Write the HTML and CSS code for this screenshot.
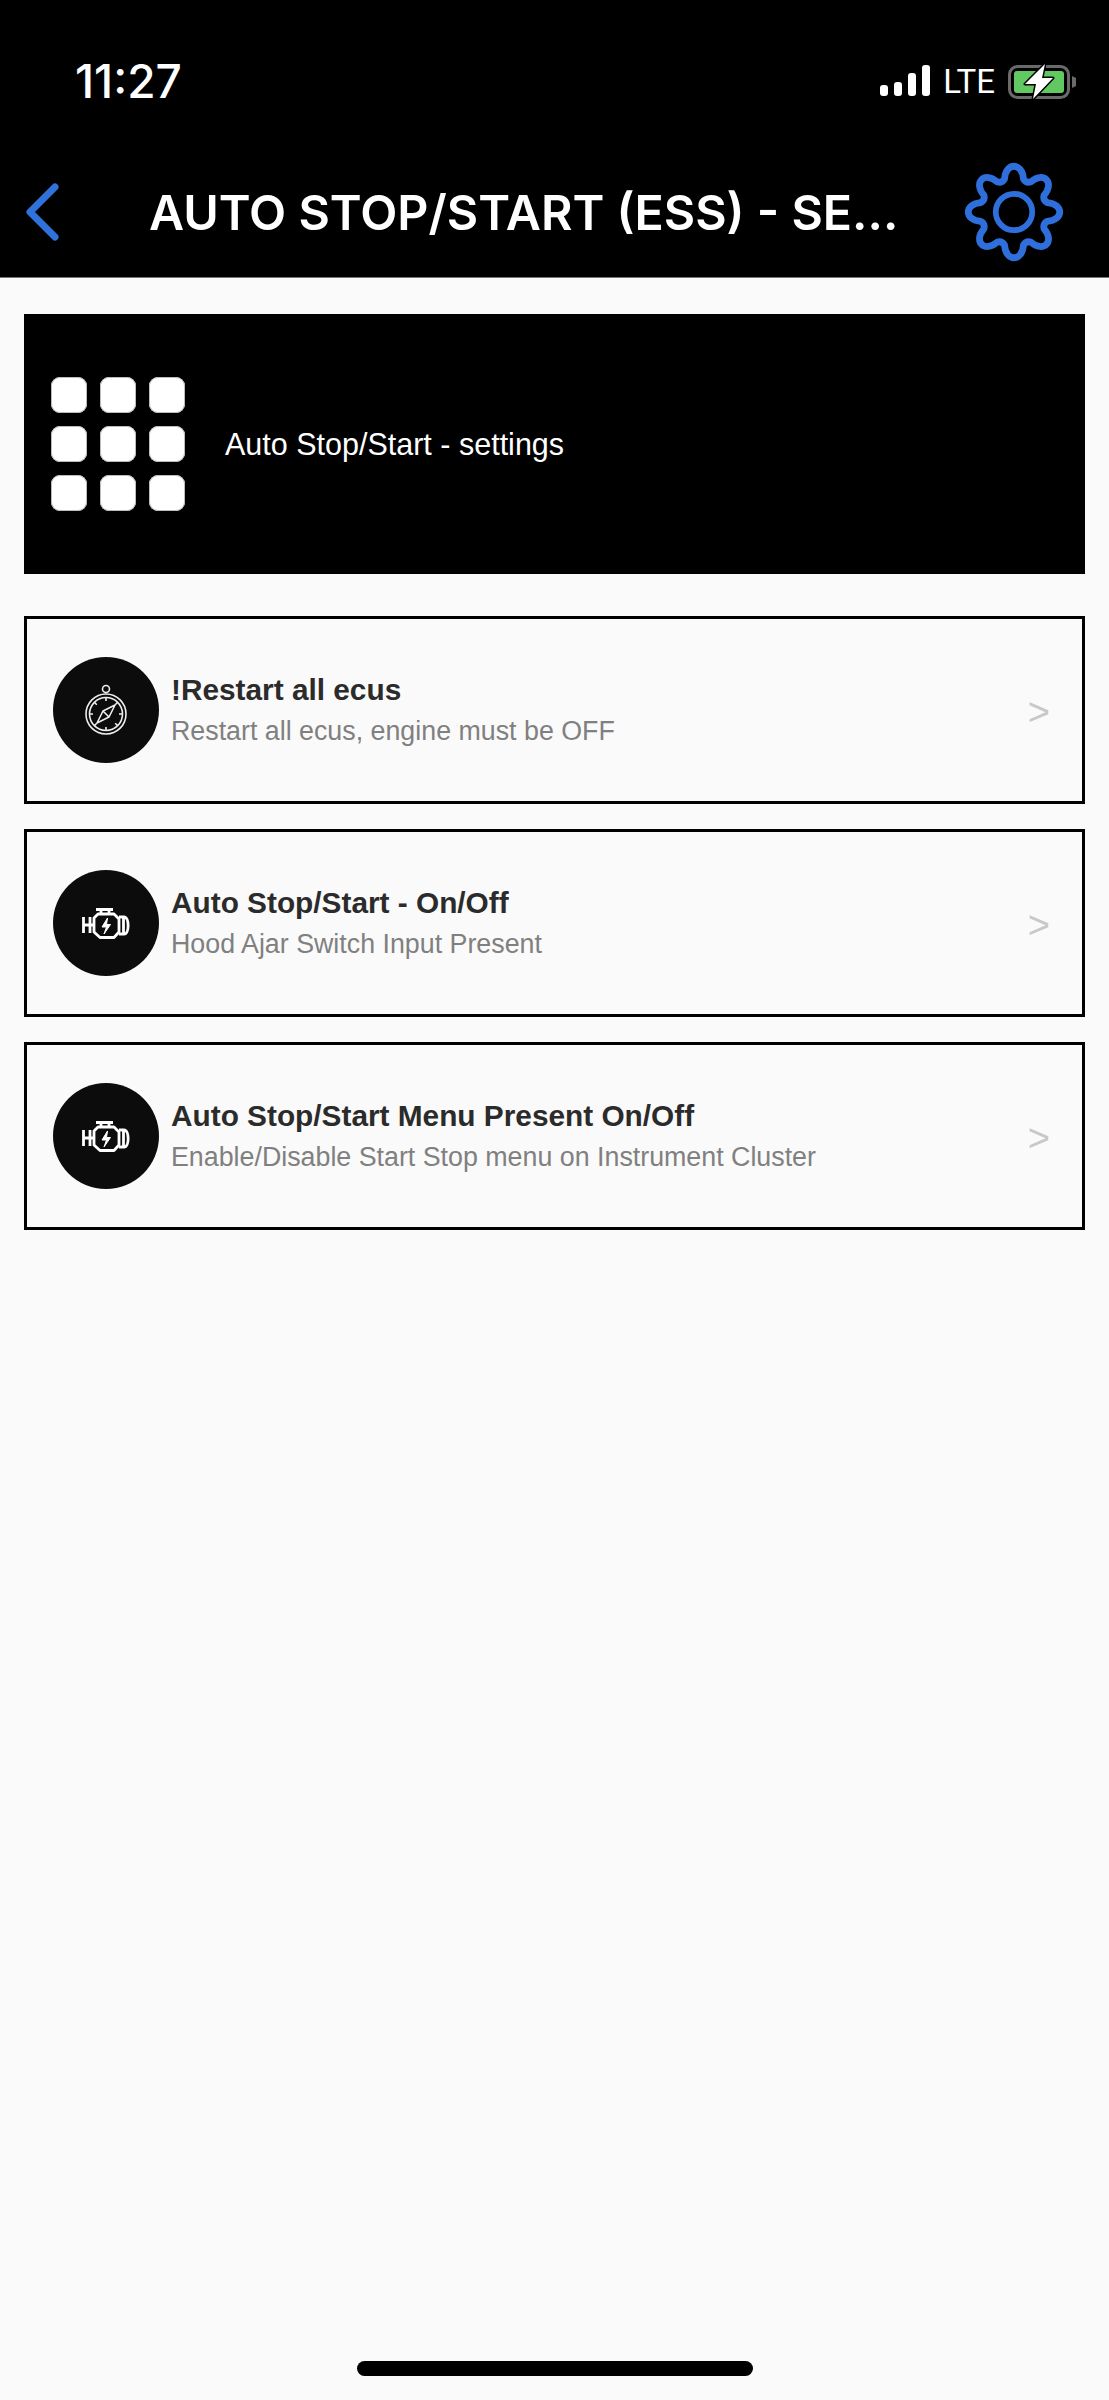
FILE: index.html
```html
<!doctype html>
<html>
<head>
  <title>Auto Stop/Start</title>
  <link rel="stylesheet" href="styles.css">
</head>
<body>
  <div id="page">
    <div id="header">
      <div id="statusBar">
        <span id="clock">11:27</span>
        <div id="statusIcons">
          <svg class="signal" width="50" height="32" viewBox="0 0 50 32" fill="#fff">
            <rect x="0" y="20" width="8" height="11" rx="3" />
            <rect x="14" y="17" width="8" height="14" rx="3" />
            <rect x="28" y="8" width="8" height="23" rx="3" />
            <rect x="42" y="0" width="8" height="31" rx="3" />
          </svg>
          <span id="network">LTE</span>
          <svg class="battery" width="69" height="37" viewBox="0 0 69 37">
            <rect x="1.5" y="3.5" width="59" height="31" rx="8" fill="none" stroke="#6a6a6a" stroke-width="3" />
            <rect x="6" y="8" width="50" height="22" rx="3" fill="#62c962" />
            <path d="M64 13 L68 15 V23 L64 25 Z" fill="#6a6a6a" />
            <path d="M37 1 L17 21 H28 L25 36 L45 15 H34 Z" fill="#fff" stroke="#000" stroke-width="3" stroke-linejoin="round" paint-order="stroke" />
          </svg>
        </div>
      </div>
      <div id="navBar">
        <svg class="back" width="36" height="60" viewBox="0 0 36 60">
          <path d="M30 5 L5 30 L30 55" fill="none" stroke="#2f72dc" stroke-width="7" stroke-linecap="round" stroke-linejoin="round" />
        </svg>
        <h1 id="navTitle">AUTO STOP/START (ESS) - SE...</h1>
        <svg class="gear" width="100" height="100" viewBox="-48 -48 96 96">
          <path fill="none" stroke="#2f6fdc" stroke-width="6.5" stroke-linejoin="round" d="M-9.1 -31.7 C-8 -48 8 -48 9.1 -31.7 Q11.5 -27.7 16 -28.8 C28.3 -39.6 39.6 -28.3 28.8 -16 Q27.7 -11.5 31.7 -9.1 C48 -8 48 8 31.7 9.1 Q27.7 11.5 28.8 16 C39.6 28.3 28.3 39.6 16 28.8 Q11.5 27.7 9.1 31.7 C8 48 -8 48 -9.1 31.7 Q-11.5 27.7 -16 28.8 C-28.3 39.6 -39.6 28.3 -28.8 16 Q-27.7 11.5 -31.7 9.1 C-48 8 -48 -8 -31.7 -9.1 Q-27.7 -11.5 -28.8 -16 C-39.6 -28.3 -28.3 -39.6 -16 -28.8 Q-11.5 -27.7 -9.1 -31.7 Z" />
          <circle r="17.5" fill="none" stroke="#2f6fdc" stroke-width="5.5" />
        </svg>
      </div>
    </div>

    <div id="content">
      <div id="banner">
        <div id="appGrid">
          <span></span><span></span><span></span>
          <span></span><span></span><span></span>
          <span></span><span></span><span></span>
        </div>
        <p id="bannerText">Auto Stop/Start - settings</p>
      </div>

      <div class="card">
        <div class="cardIcon">
          <svg width="46" height="56" viewBox="0 0 46 56" fill="none" stroke="#eee" stroke-width="1.6">
            <circle cx="23" cy="7" r="3.5" />
            <circle cx="23" cy="32" r="20" />
            <circle cx="23" cy="32" r="16.5" />
            <path d="M23 15.5 V19 M23 45 V48.5 M6.5 32 H10 M36 32 H39.5 M11.3 20.3 L13.8 22.8 M32.2 41.2 L34.7 43.7 M34.7 20.3 L32.2 22.8 M13.8 41.2 L11.3 43.7" />
            <path d="M32 23 L26 35 L14 41 L20 29 Z M20 29 L26 35" stroke-linejoin="round" />
          </svg>
        </div>
        <div class="cardText">
          <div class="cardTitle">!Restart all ecus</div>
          <div class="cardSub">Restart all ecus, engine must be OFF</div>
        </div>
        <span class="cardArrow">&gt;</span>
      </div>

      <div class="card">
        <div class="cardIcon">
          <svg width="48" height="31" viewBox="0 0 48 31" fill="none" stroke="#fff" stroke-width="2.8" stroke-linejoin="round">
            <path d="M14 1.5 H31 M19 1.5 V6 M27 1.5 V6" />
            <path d="M16 6 H32 L37 11 V24 L32 29.5 H18 L12 24 V10 Z" />
            <path d="M1.5 9 V25 M8 9 V25 M1.5 17 H12" />
            <path d="M37 9 H42 C47.5 9 47.5 26 42 26 H37 M41.5 9 V26" />
            <path d="M25.5 10 L20 19 H24.5 L22 26 L28.5 16.5 H24.5 Z" fill="#fff" stroke-width="1" />
          </svg>
        </div>
        <div class="cardText">
          <div class="cardTitle">Auto Stop/Start - On/Off</div>
          <div class="cardSub">Hood Ajar Switch Input Present</div>
        </div>
        <span class="cardArrow">&gt;</span>
      </div>

      <div class="card">
        <div class="cardIcon">
          <svg width="48" height="31" viewBox="0 0 48 31" fill="none" stroke="#fff" stroke-width="2.8" stroke-linejoin="round">
            <path d="M14 1.5 H31 M19 1.5 V6 M27 1.5 V6" />
            <path d="M16 6 H32 L37 11 V24 L32 29.5 H18 L12 24 V10 Z" />
            <path d="M1.5 9 V25 M8 9 V25 M1.5 17 H12" />
            <path d="M37 9 H42 C47.5 9 47.5 26 42 26 H37 M41.5 9 V26" />
            <path d="M25.5 10 L20 19 H24.5 L22 26 L28.5 16.5 H24.5 Z" fill="#fff" stroke-width="1" />
          </svg>
        </div>
        <div class="cardText">
          <div class="cardTitle">Auto Stop/Start Menu Present On/Off</div>
          <div class="cardSub">Enable/Disable Start Stop menu on Instrument Cluster</div>
        </div>
        <span class="cardArrow">&gt;</span>
      </div>
    </div>

    <div id="homeBar"></div>
  </div>
</body>
</html>
```

FILE: styles.css
```css
body {
  margin: 0;
  background: #fafafa;
  font-family: "Liberation Sans", Arial, sans-serif;
}

#page {
  display: flex;
  flex-direction: column;
  min-height: 2400px;
  box-sizing: border-box;
}

#header {
  background: #000;
  color: #fff;
  height: 278px;
  box-sizing: border-box;
  border-bottom: 1px solid #777;
  font-family: Inter, "Liberation Sans", sans-serif;
}

#statusBar {
  display: flex;
  justify-content: space-between;
  align-items: center;
  height: 162px;
  padding: 0 32px 0 75px;
}

#clock {
  font-size: 46px;
  font-weight: 500;
}

#statusIcons {
  display: flex;
  align-items: center;
  gap: 13px;
}

#network {
  font-size: 33px;
  font-weight: 400;
  font-family: Roboto, Inter, sans-serif;
}

#navBar {
  display: flex;
  align-items: center;
  height: 100px;
  padding: 0 45px 0 25px;
}

#navTitle {
  flex: 1;
  margin: 0 0 0 88px;
  font-size: 48.3px;
  font-weight: 600;
  white-space: nowrap;
}

#content {
  display: flex;
  flex-direction: column;
  gap: 25px;
  padding: 36px 24px 0;
}

#banner {
  display: flex;
  align-items: center;
  gap: 40px;
  height: 260px;
  margin-bottom: 17px;
  padding-left: 27px;
  background: #000;
}

#appGrid {
  display: grid;
  grid-template-columns: repeat(3, 36px);
  grid-auto-rows: 36px;
  gap: 13px;
}

#appGrid span {
  background: #fff;
  border-radius: 9px;
  box-shadow: inset 0 0 0 1px #bbb;
}

#bannerText {
  margin: 0;
  color: #fff;
  font-size: 30.5px;
}

.card {
  display: flex;
  align-items: center;
  gap: 12px;
  height: 188px;
  box-sizing: border-box;
  padding: 0 32px 0 26px;
  border: 3px solid #000;
}

.cardIcon {
  display: flex;
  align-items: center;
  justify-content: center;
  width: 106px;
  height: 106px;
  border-radius: 50%;
  background: #0c0c0c;
}

.cardText {
  flex: 1;
}

.cardTitle {
  font-size: 29.8px;
  font-weight: bold;
  color: #2b2b2b;
}

.cardSub {
  margin-top: 9px;
  font-size: 26.8px;
  color: #808080;
}

.cardArrow {
  margin-top: 4px;
  font-size: 38px;
  color: #c8c8c8;
}

#homeBar {
  width: 396px;
  height: 15px;
  margin: auto auto 24px;
  border-radius: 8px;
  background: #000;
}
```
